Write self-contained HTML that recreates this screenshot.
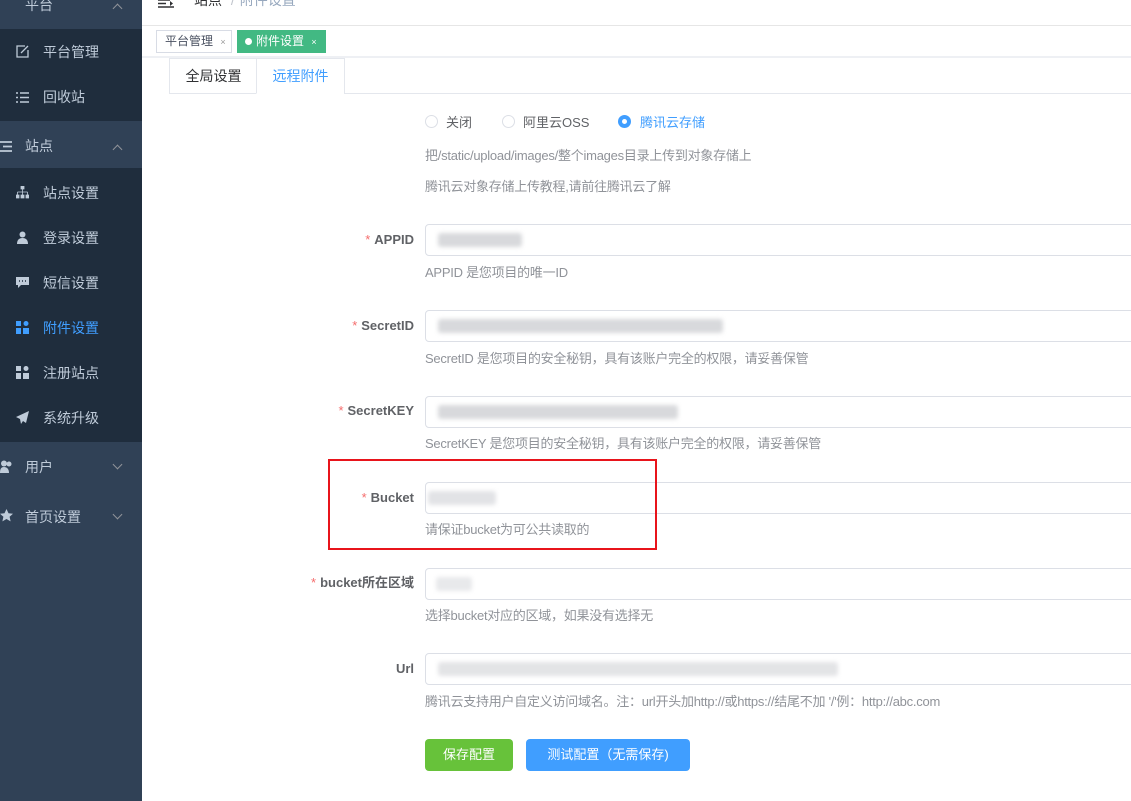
<!DOCTYPE html>
<html><head><meta charset="utf-8"><style>
*{margin:0;padding:0;box-sizing:border-box}
body{width:1131px;height:801px;overflow:hidden;position:relative;background:#fff;font-family:"Liberation Sans","Noto Sans CJK SC",sans-serif;font-size:13px;color:#606266}
.a{position:absolute;white-space:nowrap}
#sb{position:absolute;left:0;top:0;width:142px;height:801px;background:#304156}
.sub{position:absolute;left:0;width:142px;background:#1f2d3d}
.mi{position:absolute;left:43px;font-size:14px;color:#bfcbd9;line-height:16px}
.ic{position:absolute;left:16px;width:13px;height:13px}
.top{position:absolute;left:25px;font-size:14px;color:#bfcbd9;line-height:16px}
.chev{position:absolute;left:114px;width:7px;height:7px;border-left:1px solid #909399;border-top:1px solid #909399}
.lbl{position:absolute;right:717px;font-size:13px;font-weight:bold;color:#606266;line-height:16px}
.lbl b{color:#f56c6c;font-weight:normal;margin-right:4px}
.inp{position:absolute;left:425px;width:720px;height:32px;border:1px solid #dcdfe6;border-radius:4px;background:#fff}
.help{position:absolute;left:425px;font-size:13px;color:#909399;line-height:16px;letter-spacing:-0.25px}
.blur{position:absolute;top:8px;height:14px;background:#d8d9dc;filter:blur(2px);border-radius:3px}
</style></head><body>
<div id="sb">
  <div class="top" style="top:-3px">平台</div>
  <div class="chev" style="top:5px;transform:rotate(45deg)"></div>
  <div class="sub" style="top:29px;height:92px">
    <svg class="ic" style="top:16px" viewBox="0 0 13 13"><path d="M9 1H1v11h11V5M5 8l7-7" stroke="#bfcbd9" fill="none" stroke-width="1.3"/></svg>
    <div class="mi" style="top:15px">平台管理</div>
    <svg class="ic" style="top:62px" viewBox="0 0 13 13"><path d="M0 2h2M4 2h9M0 6.5h2M4 6.5h9M0 11h2M4 11h9" stroke="#bfcbd9" stroke-width="1.6"/></svg>
    <div class="mi" style="top:60px">回收站</div>
  </div>
  <svg class="ic" style="left:0;top:140px" viewBox="0 0 13 13"><path d="M0 2h12M3 6.5h9M0 11h12" stroke="#bfcbd9" stroke-width="1.8"/></svg>
  <div class="top" style="top:138px">站点</div>
  <div class="chev" style="top:146px;transform:rotate(45deg)"></div>
  <div class="sub" style="top:168px;height:274px">
    <svg class="ic" style="top:18px" viewBox="0 0 13 13"><path d="M5 0h3v3H5zM6.5 3v3M1.5 6h10M1.5 6v3M6.5 6v3M11.5 6v3M0 9h3v3H0zM5 9h3v3H5zM10 9h3v3h-3z" fill="#bfcbd9" stroke="#bfcbd9" stroke-width=".8"/></svg>
    <div class="mi" style="top:17px">站点设置</div>
    <svg class="ic" style="top:63px" viewBox="0 0 13 13"><circle cx="6.5" cy="3.5" r="3" fill="#bfcbd9"/><path d="M1 13c0-4 2-6 5.5-6S12 9 12 13z" fill="#bfcbd9"/></svg>
    <div class="mi" style="top:62px">登录设置</div>
    <svg class="ic" style="top:108px" viewBox="0 0 13 13"><path d="M0 1h13v8H5l-3 3V9H0z" fill="#bfcbd9"/><path d="M3 5h1M6 5h1M9 5h1" stroke="#1f2d3d" stroke-width="1.5"/></svg>
    <div class="mi" style="top:107px">短信设置</div>
    <svg class="ic" style="top:153px" viewBox="0 0 13 13"><path d="M0 0h5v5H0zM0 7h5v6H0zM7 7h6v6H7z" fill="#409eff"/><circle cx="10" cy="2.5" r="2.5" fill="#409eff"/></svg>
    <div class="mi" style="top:152px;color:#409eff">附件设置</div>
    <svg class="ic" style="top:198px" viewBox="0 0 13 13"><path d="M0 0h5v5H0zM0 7h5v6H0zM7 7h6v6H7z" fill="#bfcbd9"/><circle cx="10" cy="2.5" r="2.5" fill="#bfcbd9"/></svg>
    <div class="mi" style="top:197px">注册站点</div>
    <svg class="ic" style="top:243px" viewBox="0 0 13 13"><path d="M13 0L0 6l4 2 1 5 2-3 3 2z" fill="#bfcbd9"/></svg>
    <div class="mi" style="top:242px">系统升级</div>
  </div>
  <svg class="ic" style="left:0;top:460px" viewBox="0 0 13 13"><circle cx="4" cy="3.5" r="3" fill="#bfcbd9"/><path d="M0 13c0-4 1-6 4-6s5 2 5 6z" fill="#bfcbd9"/><circle cx="9" cy="4" r="2.5" fill="#bfcbd9"/></svg>
  <div class="top" style="top:459px">用户</div>
  <div class="chev" style="top:461px;transform:rotate(225deg)"></div>
  <svg class="ic" style="left:0;top:509px" viewBox="0 0 13 13"><path d="M6.5 0l2 4.3 4.5.5-3.4 3 1 4.6-4.1-2.4-4.1 2.4 1-4.6L0 4.8l4.5-.5z" fill="#bfcbd9"/></svg>
  <div class="top" style="top:509px">首页设置</div>
  <div class="chev" style="top:511px;transform:rotate(225deg)"></div>
</div>
<!-- header -->
<svg class="a" style="left:158px;top:-2px" width="16" height="12" viewBox="0 0 16 12"><path d="M0 2h12M0 9h16M0 5.5h8" stroke="#303133" stroke-width="1.5"/><path d="M12 3l3 2.5-3 2.5z" fill="#303133"/></svg>
<div class="a" style="left:194px;top:-10px;font-size:14px;color:#303133">站点 <span style="color:#c0c4cc;margin:0 5px">/</span><span style="color:#97a8be">附件设置</span></div>
<div class="a" style="left:142px;top:25px;width:989px;border-top:1px solid #e6e6e6"></div>
<div class="a" style="left:156px;top:30px;width:76px;height:23px;border:1px solid #d8dce5;font-size:12px;color:#495060;line-height:21px;padding-left:8px">平台管理 <span style="color:#999;font-size:9px;margin-left:4px">×</span></div>
<div class="a" style="left:237px;top:30px;width:89px;height:23px;background:#42b983;font-size:12px;color:#fff;line-height:23px;padding-left:8px"><span style="display:inline-block;width:7px;height:7px;border-radius:50%;background:#fff;margin-right:4px;vertical-align:0"></span>附件设置 <span style="font-size:9px;margin-left:4px">×</span></div>
<div class="a" style="left:142px;top:56px;width:989px;height:2px;background:#eef0f4"></div>
<!-- tabs -->
<div class="a" style="left:169px;top:58px;width:88px;height:36px;border:1px solid #e4e7ed;border-right:none;background:#fff;font-size:14px;color:#303133;text-align:center;line-height:34px">全局设置</div>
<div class="a" style="left:256px;top:58px;width:89px;height:36px;border:1px solid #e4e7ed;border-bottom:1px solid #fff;font-size:14px;color:#409eff;text-align:center;line-height:34px">远程附件</div>
<div class="a" style="left:344px;top:93px;width:800px;border-top:1px solid #e4e7ed"></div>
<!-- radios -->
<div class="a" style="left:425px;top:115px;width:13px;height:13px;border:1px solid #dcdfe6;border-radius:50%"></div>
<div class="a" style="left:446px;top:112px;font-size:13px;color:#606266">关闭</div>
<div class="a" style="left:502px;top:115px;width:13px;height:13px;border:1px solid #dcdfe6;border-radius:50%"></div>
<div class="a" style="left:523px;top:112px;font-size:13px;color:#606266">阿里云OSS</div>
<div class="a" style="left:618px;top:115px;width:13px;height:13px;background:#409eff;border-radius:50%"><div style="width:5px;height:5px;background:#fff;border-radius:50%;margin:4px"></div></div>
<div class="a" style="left:640px;top:112px;font-size:13px;color:#409eff">腾讯云存储</div>
<div class="help" style="top:148px">把/static/upload/images/整个images目录上传到对象存储上</div>
<div class="help" style="top:179px">腾讯云对象存储上传教程,请前往腾讯云了解</div>
<!-- fields -->
<div class="lbl" style="top:232px"><b>*</b>APPID</div>
<div class="inp" style="top:224px"><div class="blur" style="left:12px;width:84px"></div></div>
<div class="help" style="top:265px">APPID 是您项目的唯一ID</div>
<div class="lbl" style="top:318px"><b>*</b>SecretID</div>
<div class="inp" style="top:310px"><div class="blur" style="left:12px;width:285px"></div></div>
<div class="help" style="top:351px">SecretID 是您项目的安全秘钥，具有该账户完全的权限，请妥善保管</div>
<div class="lbl" style="top:403px"><b>*</b>SecretKEY</div>
<div class="inp" style="top:396px"><div class="blur" style="left:12px;width:240px"></div></div>
<div class="help" style="top:436px">SecretKEY 是您项目的安全秘钥，具有该账户完全的权限，请妥善保管</div>
<div class="lbl" style="top:490px"><b>*</b>Bucket</div>
<div class="inp" style="top:482px"><div class="blur" style="left:2px;width:68px;background:#e2e3e6"></div></div>
<div class="help" style="top:522px">请保证bucket为可公共读取的</div>
<div class="lbl" style="top:575px"><b>*</b>bucket所在区域</div>
<div class="inp" style="top:568px"><div class="blur" style="left:10px;width:36px;background:#e8e9eb"></div></div>
<div class="help" style="top:608px">选择bucket对应的区域，如果没有选择无</div>
<div class="lbl" style="top:661px">Url</div>
<div class="inp" style="top:653px"><div class="blur" style="left:12px;width:400px;background:#e3e4e6"></div></div>
<div class="help" style="top:694px">腾讯云支持用户自定义访问域名。注：url开头加http://或https://结尾不加 '/'例：http://abc.com</div>
<div class="a" style="left:425px;top:739px;width:88px;height:32px;background:#67c23a;border-radius:4px;color:#fff;font-size:13px;text-align:center;line-height:32px">保存配置</div>
<div class="a" style="left:526px;top:739px;width:164px;height:32px;background:#409eff;border-radius:4px;color:#fff;font-size:13px;text-align:center;line-height:32px">测试配置（无需保存)</div>
<!-- red box -->
<div class="a" style="left:328px;top:459px;width:329px;height:91px;border:2px solid #e8141b"></div>
</body></html>
